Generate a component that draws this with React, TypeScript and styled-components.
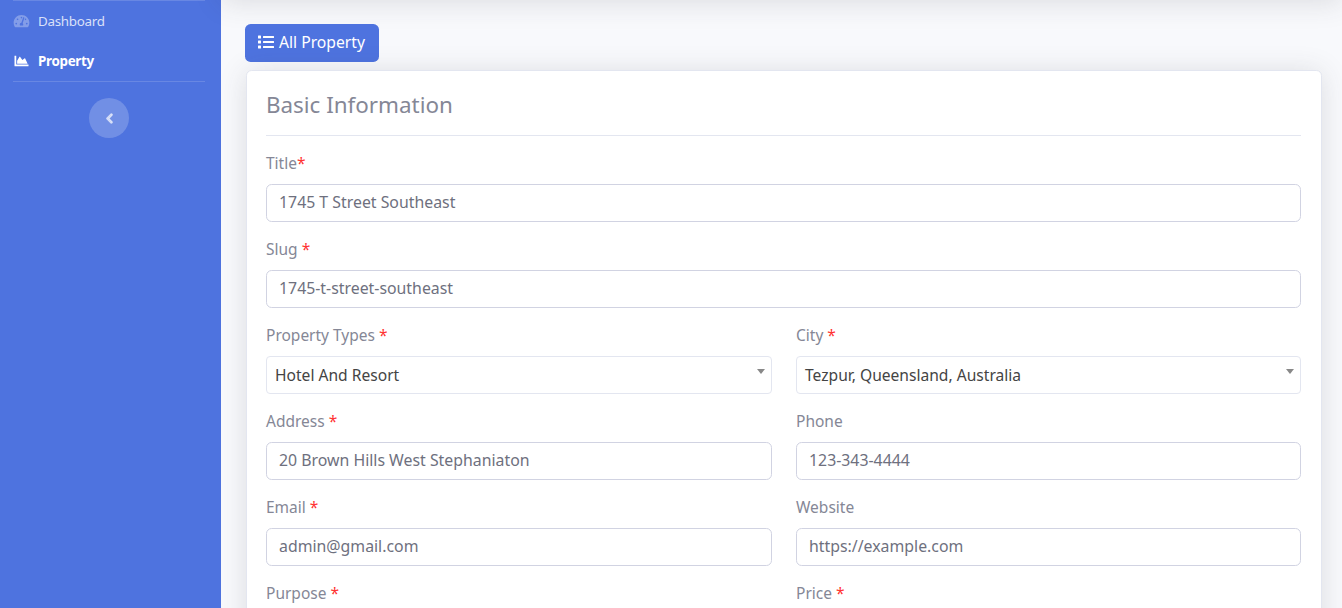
import React from "react";
import styled, { createGlobalStyle } from "styled-components";
import { FaChartArea, FaChevronLeft, FaList, FaTachometerAlt } from "react-icons/fa";

const GlobalStyle = createGlobalStyle`
  html, body {
    margin: 0;
    height: 100%;
    overflow: hidden;
    background: #f8f9fc;
    font-family: "Noto Sans", "Open Sans", sans-serif;
    font-size: 15px;
    color: #858796;
  }
  * { box-sizing: border-box; }
`;

const Page = styled.div`
  display: flex;
  height: 608px;
  overflow: hidden;
`;

const Sidebar = styled.aside`
  flex: 0 0 221px;
  display: flex;
  flex-direction: column;
  align-items: stretch;
  padding: 0 16px 0 13px;
  background: #4e73df;
`;

const Divider = styled.hr`
  width: 192px;
  height: 1px;
  margin: 0;
  border: 0;
  background: rgba(255, 255, 255, 0.15);
`;

const NavItem = styled.a<{ $active?: boolean }>`
  display: flex;
  align-items: center;
  gap: 8px;
  height: 40px;
  padding-bottom: 1px;
  font-size: 13.4px;
  font-weight: ${(p) => (p.$active ? 700 : 400)};
  color: ${(p) => (p.$active ? "#fff" : "rgba(255, 255, 255, 0.8)")};
  letter-spacing: -0.3px;
  svg {
    width: 17px;
    height: 14px;
    color: ${(p) => (p.$active ? "#fff" : "rgba(255, 255, 255, 0.3)")};
  }
`;

const Toggle = styled.button`
  display: flex;
  align-items: center;
  justify-content: center;
  width: 40px;
  height: 40px;
  margin: 16px 0 0 76px;
  padding: 0;
  border: 0;
  border-radius: 50%;
  background: rgba(255, 255, 255, 0.2);
  color: rgba(255, 255, 255, 0.6);
  font-size: 11px;
  svg {
    stroke: currentColor;
    stroke-width: 50px;
  }
`;

const Main = styled.main`
  flex: 1;
  min-width: 0;
  padding: 0 20px 0 24px;
`;

const Topbar = styled.div`
  height: 70px;
  margin: -70px -20px 24px -24px;
  background: #fff;
  box-shadow: 0 2.4px 28px 0 rgba(58, 59, 69, 0.15);
`;

const AddButton = styled.a`
  display: flex;
  align-items: center;
  gap: 5px;
  width: 134px;
  height: 38px;
  padding: 0 0 2px 13px;
  border-radius: 5.6px;
  background: #4e73df;
  color: #fff;
  font-size: 15.7px;
  svg {
    width: 16px;
    height: 16px;
  }
`;

const Card = styled.section`
  margin: 8px 0 0 1px;
  height: 600px;
  padding: 0 20px 0 19px;
  background: #fff;
  border: 1px solid #e3e6f0;
  border-radius: 5.6px;
  box-shadow: 0 2.4px 28px 0 rgba(58, 59, 69, 0.15);
`;

const CardTitle = styled.h4`
  height: 65px;
  margin: 0 0 16px;
  padding-top: 16px;
  border-bottom: 1px solid #e3e6f0;
  font-size: 22.4px;
  line-height: 35px;
  font-weight: 400;
  color: #858796;
`;

const Row = styled.div`
  display: grid;
  grid-template-columns: 506px 505px;
  column-gap: 24px;
`;

const Field = styled.div`
  margin-bottom: 16px;
`;

const Label = styled.label`
  display: block;
  height: 24px;
  margin-bottom: 8px;
  line-height: 22px;
  font-size: 15.5px;
`;

const Required = styled.span`
  color: #f33;
`;

const Input = styled.input`
  display: block;
  width: 100%;
  height: 38px;
  padding: 0 12px 2px;
  border: 1px solid #d1d3e2;
  border-radius: 5.6px;
  background: #fff;
  color: #6e707e;
  font: inherit;
  font-size: 15.85px;
  outline: none;
`;

const SelectBox = styled.div`
  position: relative;
  height: 38px;
  padding: 0 8px;
  border: 1px solid #e3e6f0;
  border-radius: 4px;
  background: #fff;
  color: #444;
  line-height: 36px;
  font-size: 15.6px;
  &::after {
    content: "";
    position: absolute;
    top: 12px;
    right: 6px;
    border-style: solid;
    border-width: 5px 4px 0;
    border-color: #888 transparent transparent;
  }
`;

type FieldProps = { label: string; value?: string; req?: boolean; tight?: boolean; select?: boolean };

const FormField: React.FC<FieldProps> = ({ label, value, req, tight, select }) => (
  <Field>
    <Label>
      {label}
      {req && !tight ? " " : ""}
      {req && <Required>*</Required>}
    </Label>
    {select ? <SelectBox>{value}</SelectBox> : value !== undefined && <Input readOnly value={value} />}
  </Field>
);

const App: React.FC = () => (
  <Page>
    <GlobalStyle />
    <Sidebar>
      <Divider />
      <NavItem>
        <FaTachometerAlt />
        Dashboard
      </NavItem>
      <NavItem $active>
        <FaChartArea />
        Property
      </NavItem>
      <Divider />
      <Toggle>
        <FaChevronLeft />
      </Toggle>
    </Sidebar>
    <Main>
      <Topbar />
      <AddButton>
        <FaList />
        All Property
      </AddButton>
      <Card>
        <CardTitle>Basic Information</CardTitle>
        <FormField label="Title" req tight value="1745 T Street Southeast" />
        <FormField label="Slug" req value="1745-t-street-southeast" />
        <Row>
          <FormField label="Property Types" req select value="Hotel And Resort" />
          <FormField label="City" req select value="Tezpur, Queensland, Australia" />
          <FormField label="Address" req value="20 Brown Hills West Stephaniaton" />
          <FormField label="Phone" value="123-343-4444" />
          <FormField label="Email" req value="admin@gmail.com" />
          <FormField label="Website" value="https://example.com" />
          <FormField label="Purpose" req />
          <FormField label="Price" req />
        </Row>
      </Card>
    </Main>
  </Page>
);

export default App;
